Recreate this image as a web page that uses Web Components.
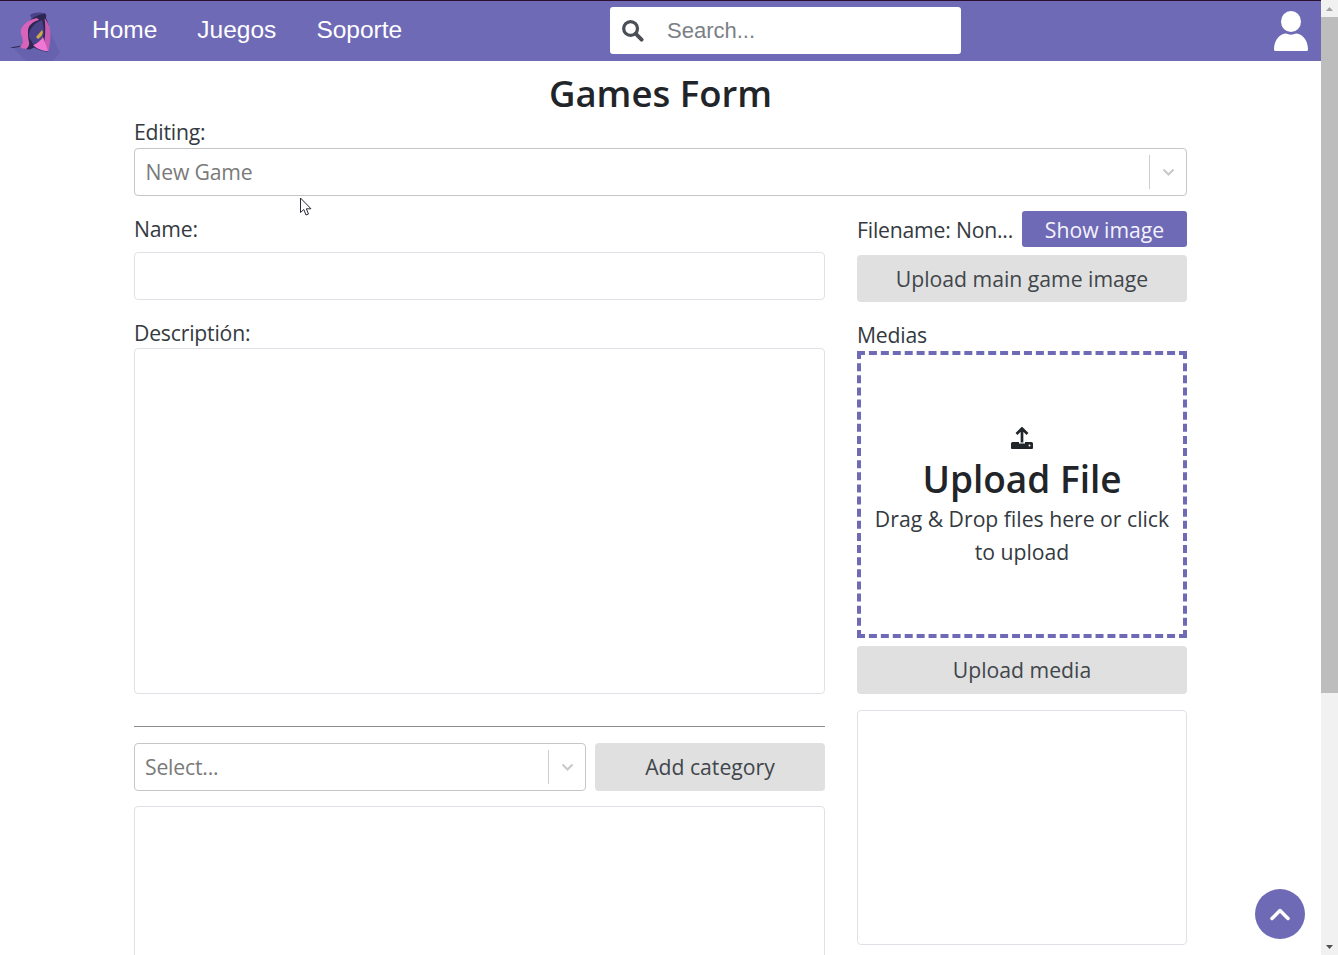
<!DOCTYPE html>
<html lang="en"><head><meta charset="utf-8"><title>Games Form</title>
<style>
html,body{margin:0;height:955px;overflow:hidden;background:#fff}
body{font-family:"Open Sans","Noto Sans",sans-serif;color:#212529}
</style></head><body>
<games-app></games-app>
<script>
class El extends HTMLElement{
  constructor(){super();this.attachShadow({mode:'open'}).innerHTML=`<style>${this.constructor.css}</style>${this.constructor.html}`;}
}
class TopNav extends El{
 static css=`:host{display:flex;align-items:center;height:60px;box-sizing:content-box;border-top:1px solid #2b0f2c;background:#6f6ab6;font-family:"Liberation Sans",Arial,sans-serif;color:#fff;position:relative}
 .logo{width:60px;height:60px;flex:none;margin-top:-1px}
 nav{display:flex;gap:40px;margin-left:32px;font-size:24.5px;width:518px;margin-top:-2px}
 .search{display:flex;align-items:center;width:351px;height:47px;background:#fff;border-radius:3px;flex:none;margin-top:-1px}
 .search svg{width:23px;height:23px;margin-left:11px;flex:none}
 .search span{margin-left:23px;font-size:22px;color:#7b8086}
 .user{width:36px;height:40px;margin-left:auto;margin-right:12px;flex:none;margin-top:-1px}`;
 static html=`<svg class="logo" viewBox="0 0 60 60">
   <path d="M14 48L50 30 60 52 52 60H26Z" fill="#5f5aa5" opacity=".5"/>
   <path d="M10 46.500l12-2 2-9c0-10 6-18 12-21 3-2 7-3 9-2 2 2 1 3 1 5 3 5 4 13 3 20l-1 13c-5 0-10-2-14-4l-4 2c-4 0-7-1-9-3-4 1-8 2-11 1Z" fill="#2d2650"/>
   <path d="M20 46c4-4 3-8 1-13-2-7 6-14 16-16l2 2c-7 2-11 6-11 11 0 4 0 8 1 11 1 3-2 7-3 7-3 0-4-1-6-2Z" fill="#d763bb"/>
   <path d="M44.500 17c4 5 6 10 6 16 0 6-1 12-2 17l-5-1 1-10c1-7 1-15 0-22Z" fill="#c95cb2"/>
   <path d="M29 36c-1-7 4-13 13-17 2 6 2 13 1 18-3 4-6 6-10 6Z" fill="#4a4389"/>
   <path d="M36 36l6-7 1 2c-.5 3-2 5-5 7Z" fill="#c9a94a"/>
   <path d="M33 44c4-1 8-5 10-8l5 14c-5 0-11-2-15-6Z" fill="#ee78d4"/>
   <path d="M30 14c5-3 11-3 15-1-5 0-10 2-13 5Z" fill="#4a4389"/>
 </svg>
 <nav><span>Home</span><span>Juegos</span><span>Soporte</span></nav>
 <div class="search"><svg viewBox="0 0 24 24"><circle cx="10" cy="10" r="7.200" fill="none" stroke="#494f55" stroke-width="3.400"/><path d="M15.500 15.500l6 6" stroke="#494f55" stroke-width="4" stroke-linecap="round"/></svg><span>Search...</span></div>
 <svg class="user" viewBox="0 0 36 40"><ellipse cx="18" cy="10.500" rx="10" ry="10.500" fill="#fff"/><path d="M1 38.500C1 28 8 22.500 13 22.500c3 1.500 7 1.500 10 0C28 22.500 35 28 35 38.500c0 .8-.5 1.500-1.500 1.500h-31C1.500 40 1 39.300 1 38.500Z" fill="#fff"/></svg>`;
}
class FieldLabel extends El{
 static css=`:host{display:block;font-size:21.200px;line-height:28px;color:#343a40;letter-spacing:-.2px}`;
 static html=`<slot></slot>`;
}
class TextBox extends El{
 static css=`:host{display:block;box-sizing:border-box;border:1px solid #dee2e6;border-radius:4px;background:#fff;height:48px}`;
 static html=`<slot></slot>`;
}
class SelectBox extends El{
 static css=`:host{display:flex;align-items:center;box-sizing:border-box;height:48px;border:1px solid #c6c6c6;border-radius:4px;background:#fff;font-size:21.200px;color:#7a7a7a;padding-left:10px;letter-spacing:-.2px}
 .v{flex:1;margin-top:-2px}.s{width:1px;height:34px;background:#ccc}.c{width:36px;display:flex;justify-content:center}
 svg{width:13px;height:8px}`;
 static html=`<span class="v"><slot></slot></span><span class="s"></span><span class="c"><svg viewBox="0 0 13 8"><path d="M1.500 1.500L6.500 6.500 11.500 1.500" fill="none" stroke="#c9c9c9" stroke-width="2"/></svg></span>`;
}
class GrayButton extends El{
 static css=`:host{display:flex;align-items:center;justify-content:center;box-sizing:border-box;height:47px;background:#e0e0e0;border-radius:4px;font-size:21.200px;color:#41464b}`;
 static html=`<slot></slot>`;
}
class DropZone extends El{
 static css=`:host{display:flex;flex-direction:column;align-items:center;justify-content:flex-start;box-sizing:border-box;height:287px;border:4px dashed #6f6ab6;padding:72px 12px 0;text-align:center}
 svg{width:22px;height:22px;flex:none}
 h2{margin:7px 0 1px;font-size:37px;line-height:45px;font-weight:600;color:#212529}
 p{margin:0;font-size:21.200px;line-height:33px;color:#343a40}`;
 static html=`<svg viewBox="0 0 22 22"><path d="M5.500 7L11 1.500 16.500 7M11 2V15.500" fill="none" stroke="#212529" stroke-width="2.700"/><path d="M0 16.500a1.500 1.500 0 0 1 1.500-1.500H8v1.500h6V15h6.500a1.500 1.500 0 0 1 1.500 1.500V21a1 1 0 0 1-1 1H1a1 1 0 0 1-1-1Z" fill="#212529"/><circle cx="18.500" cy="18.500" r="1" fill="#fff"/></svg><h2>Upload File</h2><p>Drag &amp; Drop files here or click to upload</p>`;
}
class FakeScrollbar extends El{
 static css=`:host{display:flex;flex-direction:column;align-items:center;width:17px;flex:none;height:955px;background:#f1f1f1}
 .a{height:17px;display:flex;align-items:center;justify-content:center;flex:none}
 .t{width:17px;height:676px;background:#bdbdbd;flex:none}
 .sp{flex:1}
 svg{width:9px;height:6px}`;
 static html=`<div class="a"><svg viewBox="0 0 9 6"><path d="M4.500 1L8 5H1Z" fill="#a3a3a3"/></svg></div><div class="t"></div><div class="sp"></div><div class="a"><svg viewBox="0 0 9 6"><path d="M1 1H8L4.500 5Z" fill="#505050"/></svg></div>`;
}
class ToTop extends El{
 static css=`:host{position:absolute;left:1255px;top:889px;width:50px;height:50px;border-radius:50%;background:#6f6ab6;display:flex;align-items:center;justify-content:center}
 svg{width:22px;height:14px}`;
 static html=`<svg viewBox="0 0 22 14"><path d="M3 11.500L11 3.500 19 11.500" fill="none" stroke="#fff" stroke-width="3.500" stroke-linecap="round" stroke-linejoin="round"/></svg>`;
}
class GamesForm extends El{
 static css=`:host{display:block;width:1053px;margin:0 auto 0 134px;font-size:21.200px}
 h1{margin:0;height:60px;display:flex;align-items:center;justify-content:center;padding-top:4px;box-sizing:border-box;font-size:36.500px;font-weight:600;color:#212529;line-height:1}
 .ed{height:27px}.ed field-label{line-height:27px;margin-top:-3px}
 .sel-main{margin-top:3px;margin-bottom:15px}
 .cols{display:flex;gap:32px;align-items:flex-start}
 .l{width:691px;flex:none;display:flex;flex-direction:column}
 .r{width:330px;flex:none;display:flex;flex-direction:column}
 .nm{display:flex;align-items:flex-end;padding-bottom:9px;box-sizing:border-box;height:41px}
 .ds{margin-top:19px;height:29px}.ta{height:346px}
 hr{border:0;border-top:1px solid #8c8c8c;margin:32px 0 16px;height:0;width:100%}
 .cat{display:flex;gap:9px}.cat select-box{flex:1}.cat gray-button{width:230px;height:48px;padding-bottom:2px}
 .list{height:200px;margin-top:15px;border-radius:4px 4px 0 0;flex:none}
 .fn{display:flex;align-items:center;height:36px;white-space:nowrap}
 .fn field-label{margin-top:2px}
 .show{margin-left:auto;flex:none;width:165px;height:36px;background:#6f6ab6;color:#f4f3fb;border-radius:3px;display:flex;align-items:center;justify-content:center}
 .up{margin-top:8px}
 .md{height:28px;margin-top:19px;margin-bottom:2px}
 .um{margin-top:8px;height:48px;padding-bottom:2px}
 .media{height:235px;margin-top:16px}`;
 static html=`<h1>Games Form</h1>
 <div class="ed"><field-label>Editing:</field-label></div>
 <select-box class="sel-main" style="padding-left:10.500px">New Game</select-box>
 <div class="cols">
  <div class="l">
   <field-label class="nm">Name:</field-label><text-box></text-box>
   <field-label class="ds">Descripti&oacute;n:</field-label><text-box class="ta"></text-box>
   <hr>
   <div class="cat"><select-box>Select...</select-box><gray-button>Add category</gray-button></div>
   <text-box class="list"></text-box>
  </div>
  <div class="r">
   <div class="fn"><field-label>Filename: Non...</field-label><div class="show">Show image</div></div>
   <gray-button class="up">Upload main game image</gray-button>
   <field-label class="md">Medias</field-label>
   <drop-zone></drop-zone>
   <gray-button class="um">Upload media</gray-button>
   <text-box class="media"></text-box>
  </div>
 </div>`;
}
class GamesApp extends El{
 static css=`:host{display:flex;width:1338px;height:955px;overflow:hidden;position:relative}
 .main{width:1321px;flex:none;overflow:hidden;height:955px}
 .cur{position:absolute;left:299px;top:197px;width:14px;height:20px}`;
 static html=`<div class="main"><top-nav></top-nav><games-form></games-form></div><fake-scrollbar></fake-scrollbar><to-top></to-top>
 <svg class="cur" viewBox="0 0 14 20"><path d="M1.500 1V15.500L4.800 12.500 7 18 9.500 17 7.300 11.800H12Z" fill="#fff" stroke="#2a2a3a" stroke-width="1"/></svg>`;
}
customElements.define('top-nav',TopNav);
customElements.define('field-label',FieldLabel);
customElements.define('text-box',TextBox);
customElements.define('select-box',SelectBox);
customElements.define('gray-button',GrayButton);
customElements.define('drop-zone',DropZone);
customElements.define('fake-scrollbar',FakeScrollbar);
customElements.define('to-top',ToTop);
customElements.define('games-form',GamesForm);
customElements.define('games-app',GamesApp);
</script>
</body></html>
